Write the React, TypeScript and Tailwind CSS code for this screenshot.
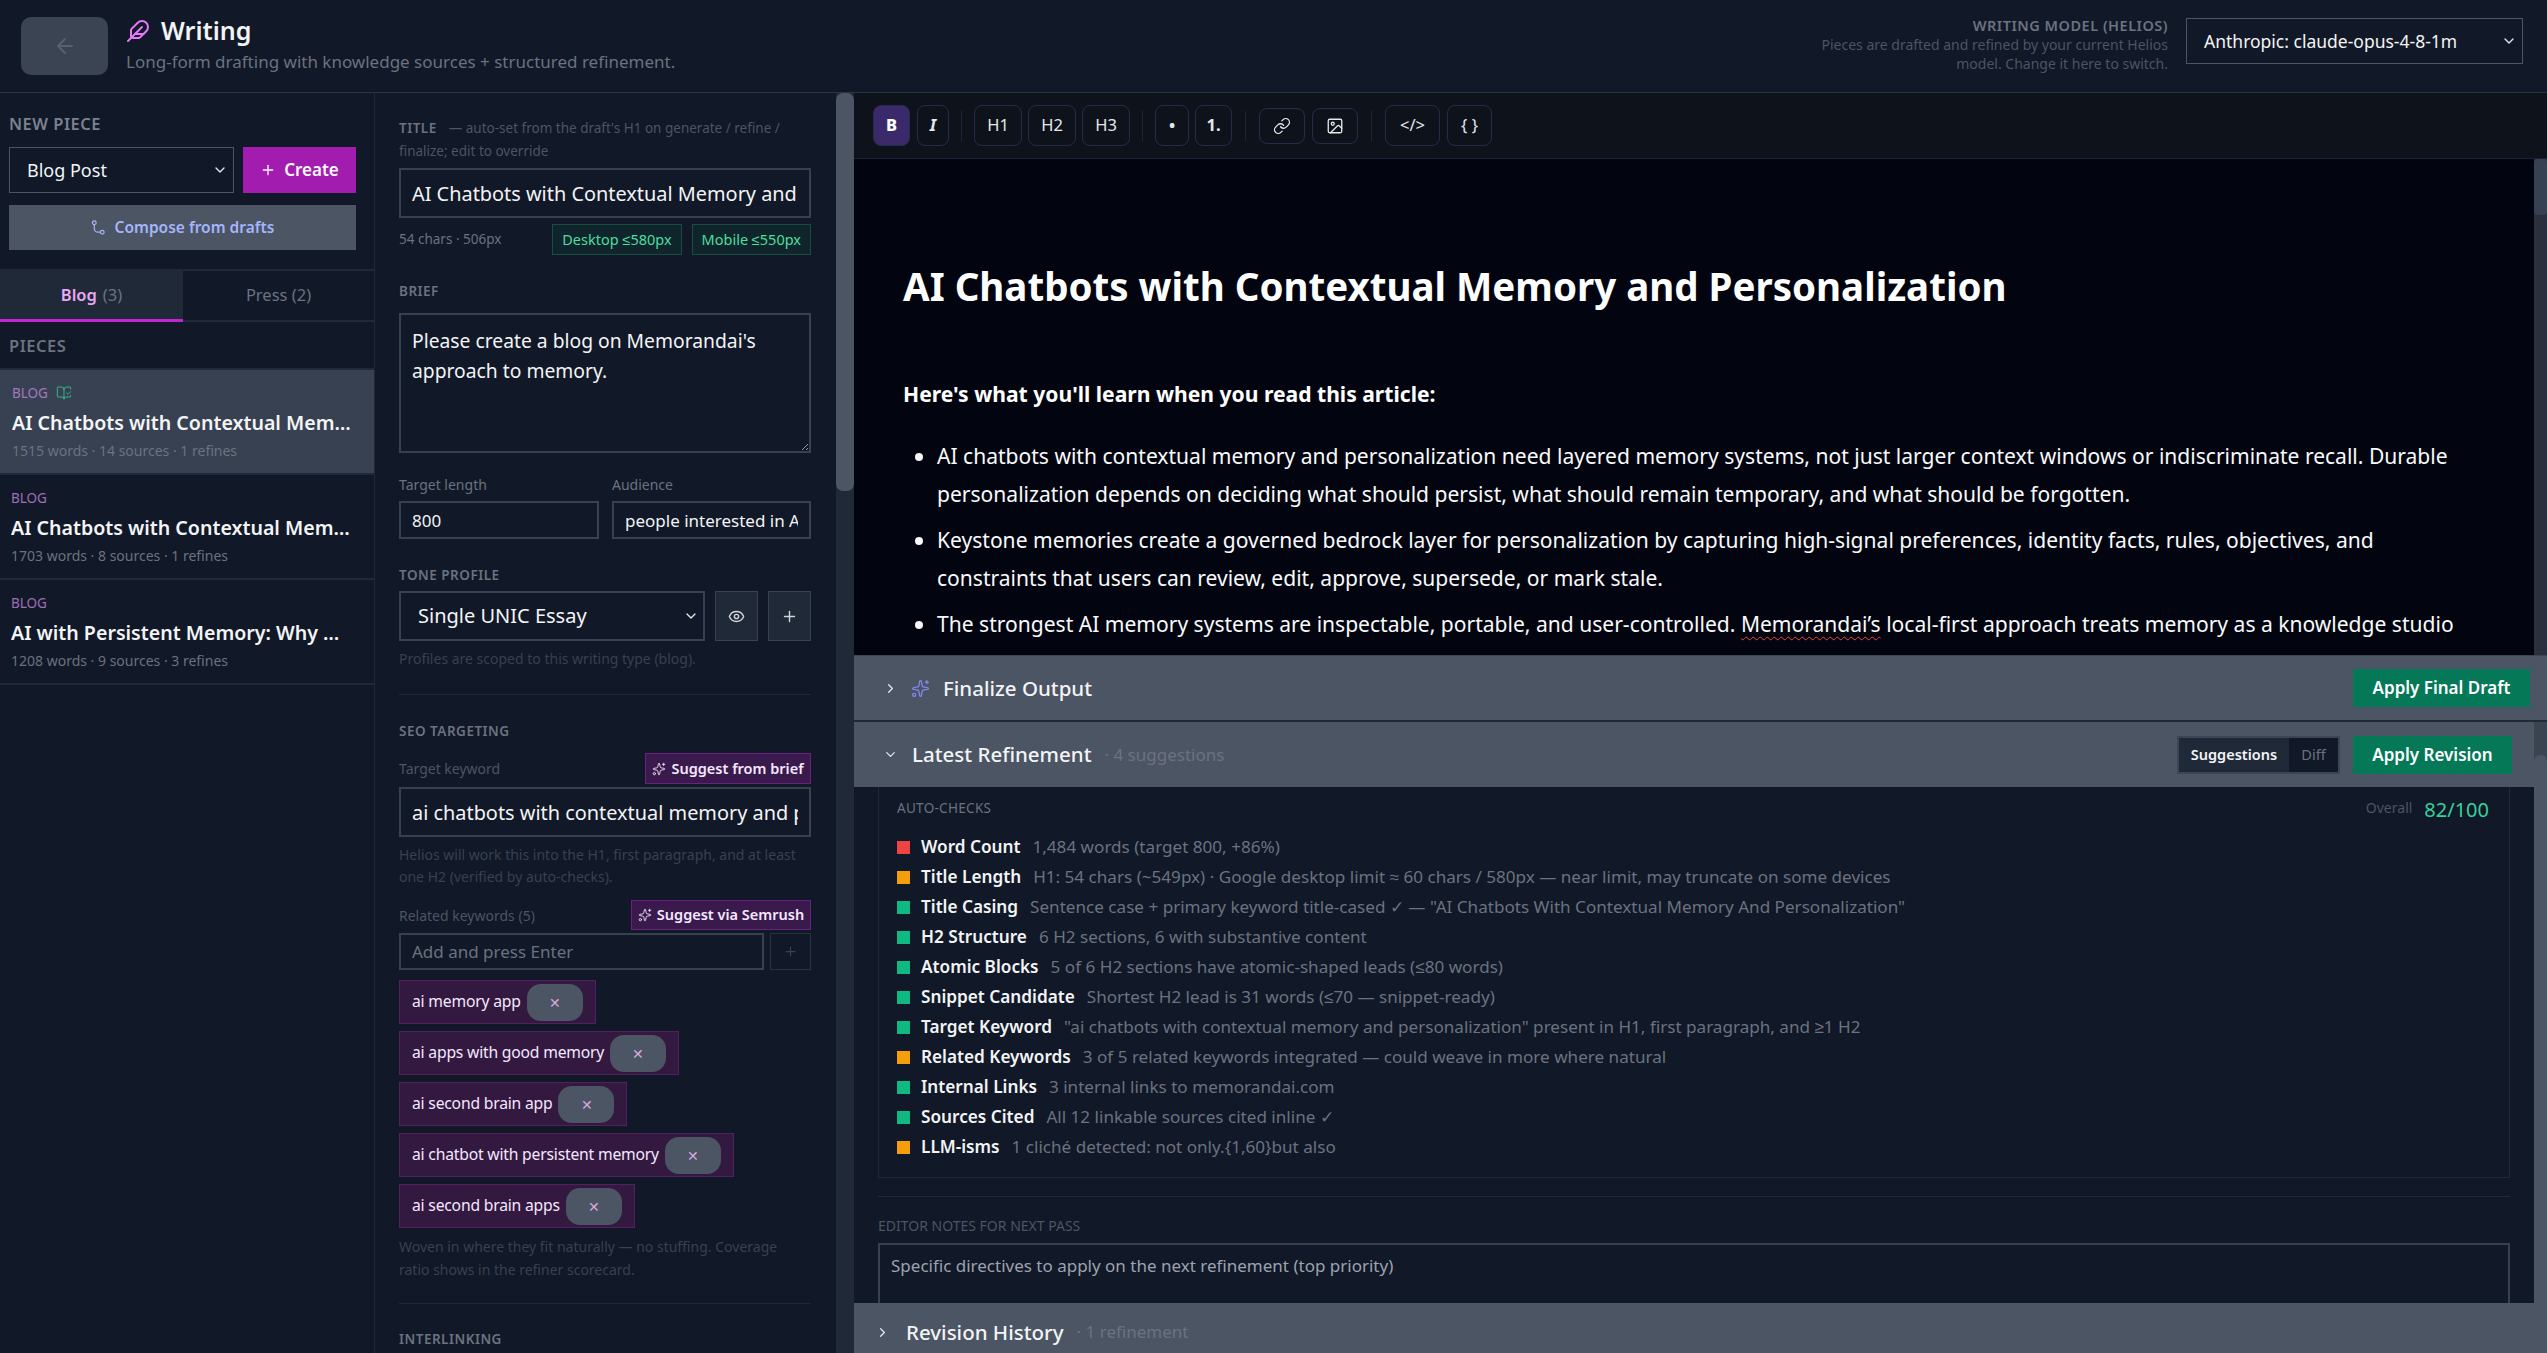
import React from "react";
import { ArrowLeft, BookOpenCheck, ChevronDown, ChevronRight, Eye, Feather, Image as ImageIcon, Link as LinkIcon, Plus, Sparkles } from "lucide-react";

const checks: [string, string, string][] = [
  ["bg-[#ef4444]", "Word Count", "1,484 words (target 800, +86%)"],
  ["bg-[#f59e0b]", "Title Length", "H1: 54 chars (~549px) · Google desktop limit ≈ 60 chars / 580px — near limit, may truncate on some devices"],
  ["bg-[#10b981]", "Title Casing", "Sentence case + primary keyword title-cased ✓ — \"AI Chatbots With Contextual Memory And Personalization\""],
  ["bg-[#10b981]", "H2 Structure", "6 H2 sections, 6 with substantive content"],
  ["bg-[#10b981]", "Atomic Blocks", "5 of 6 H2 sections have atomic-shaped leads (≤80 words)"],
  ["bg-[#10b981]", "Snippet Candidate", "Shortest H2 lead is 31 words (≤70 — snippet-ready)"],
  ["bg-[#10b981]", "Target Keyword", "\"ai chatbots with contextual memory and personalization\" present in H1, first paragraph, and ≥1 H2"],
  ["bg-[#f59e0b]", "Related Keywords", "3 of 5 related keywords integrated — could weave in more where natural"],
  ["bg-[#10b981]", "Internal Links", "3 internal links to memorandai.com"],
  ["bg-[#10b981]", "Sources Cited", "All 12 linkable sources cited inline ✓"],
  ["bg-[#f59e0b]", "LLM-isms", "1 cliché detected: not only.{1,60}but also"],
];

const Label = ({ children, className = "" }: { children: React.ReactNode; className?: string }) => (
  <div className={"h-5 leading-5 text-[13.5px] font-semibold tracking-[0.5px] text-[#6b7280] " + className}>{children}</div>
);

const inputCls = "w-full bg-[#111827] border-2 border-[#374151] text-[#f3f4f6] px-[11px] outline-none";

const Select = ({ value, className = "", selectClass = "" }: { value: string; className?: string; selectClass?: string }) => (
  <div className={"relative " + className}>
    <select className={"appearance-none w-full h-full bg-[#111827] text-[#f3f4f6] pl-[17px] outline-none " + selectClass}>
      <option>{value}</option>
    </select>
    <ChevronDown className="absolute right-[6px] top-1/2 -translate-y-1/2 w-[16px] h-[16px] text-[#e5e7eb] pointer-events-none" strokeWidth={2} />
  </div>
);

const Piece = ({ title, meta, active, icon }: { title: string; meta: string; active?: boolean; icon?: boolean }) => (
  <div className={"h-[105px] pr-[20px] pt-[12px] border-b-2 border-[#1f2937] " + (active ? "bg-[#374151] pl-[12px]" : "pl-[11px]")}>
    <div className="flex items-center gap-2 h-[22px] text-[13.5px] text-[#c084d8] opacity-80">
      BLOG
      {icon && <BookOpenCheck className="w-[16px] h-[16px] text-[#34d399]" strokeWidth={1.5} />}
    </div>
    <div className="mt-[4px] h-[30px] leading-[30px] text-[19.6px] font-semibold text-[#f3f4f6] truncate">{title}</div>
    <div className="mt-[2px] h-[22px] leading-[22px] text-[14px] text-[#6b7280]">{meta}</div>
  </div>
);

const Chip = ({ text }: { text: string }) => (
  <div className="self-start inline-flex items-center gap-[6px] h-[44px] pl-[12px] pr-[12px] bg-[#33183f] border border-[#51205f] text-[15.7px] text-[#f3e8ff] tracking-[-0.2px]">
    {text}
    <span className="flex items-center justify-center w-[56px] h-[37px] rounded-[14px] bg-[#4b5563] text-[#d8a8e0] text-[14px]">✕</span>
  </div>
);

const ToolBtn = ({ children, className = "" }: { children: React.ReactNode; className?: string }) => (
  <button className={"flex items-center justify-center h-[41px] rounded-[8px] border border-[#272b4a] text-[#e5e7eb] text-[16.5px] " + className}>{children}</button>
);
const Sep = () => <div className="w-px h-[30px] mx-[12px] bg-[#1f2433]" />;

export default function App() {
  return (
    <div className="h-[1353px] w-[2547px] overflow-hidden flex flex-col bg-[#111827] font-['Noto_Sans',sans-serif]">
      <header className="h-[93px] shrink-0 flex items-center border-b border-[#2a3442] bg-[#111827]">
        <button className="ml-[21px] w-[87px] h-[58px] rounded-[10px] bg-[#3a4452] flex items-center justify-center text-[#566070]">
          <ArrowLeft className="w-[24px] h-[24px]" strokeWidth={2} />
        </button>
        <div className="ml-[18px] -mt-[4px]">
          <div className="flex items-center h-[35px]">
            <Feather className="w-[24px] h-[24px] text-[#e879f9]" strokeWidth={2} />
            <span className="ml-[11px] text-[25px] font-semibold text-[#f3f4f6]">Writing</span>
          </div>
          <div className="text-[17px] leading-[27px] text-[#6b7280]">Long-form drafting with knowledge sources + structured refinement.</div>
        </div>
        <div className="ml-auto text-right mr-[18px] -mt-[4px]">
          <div className="text-[14.5px] leading-[20px] font-semibold tracking-[0.5px] text-[#6b7280]">WRITING MODEL (HELIOS)</div>
          <div className="text-[14px] leading-[19px] text-[#4b5563]">Pieces are drafted and refined by your current Helios<br />model. Change it here to switch.</div>
        </div>
        <Select value="Anthropic: claude-opus-4-8-1m" className="mr-[24px] w-[337px] h-[46px] mb-[10px]" selectClass="border border-[#4b5563] text-[17.5px]" />
      </header>

      <div className="flex-1 flex min-h-0">
        {/* Left rail */}
        <aside className="w-[375px] shrink-0 border-r border-[#1f2937] flex flex-col">
          <div className="px-[9px] pt-[21px] pb-[19px]">
            <Label className="!text-[16.5px] text-[#7a8290]">NEW PIECE</Label>
            <div className="mt-[13px] flex gap-[9px] h-[46px]">
              <Select value="Blog Post" className="w-[225px] h-full" selectClass="border border-[#4b5563] text-[18px]" />
              <button className="w-[113px] h-full bg-[#a21caf] text-[#f9f9f9] text-[17px] font-semibold flex items-center justify-center gap-[8px]">
                <Plus className="w-[16px] h-[16px]" />Create
              </button>
            </div>
            <button className="mt-[12px] w-[347px] h-[45px] bg-[#4b5563] text-[#a5b4fc] text-[15.5px] font-semibold flex items-center justify-center gap-[9px]">
              <svg viewBox="0 0 16 16" fill="none" stroke="currentColor" strokeWidth="1.3" strokeLinecap="round" className="w-[15px] h-[15px]">
                <circle cx="3.5" cy="3" r="2" />
                <path d="M3.5 5v4a4 4 0 0 0 4 4h2" />
                <circle cx="12" cy="13" r="2" />
              </svg>
              Compose from drafts
            </button>
          </div>
          <div className="h-[53px] flex border-y-2 border-[#1f2937] text-[16.5px]">
            <div className="w-[183px] bg-[#1f2937] border-b-[3px] border-[#c026d3] -mb-[2px] flex items-center justify-center gap-[6px] text-[#e9a8f5] font-semibold">
              Blog <span className="font-normal text-[#6b7280]">(3)</span>
            </div>
            <div className="flex-1 flex items-center justify-center text-[#6b7280]">Press (2)</div>
          </div>
          <div className="h-[47px] flex items-center px-[9px]">
            <Label className="!text-[16.5px]">PIECES</Label>
          </div>
          <div className="border-t-2 border-[#1f2937] -mt-[1px]">
            <Piece active icon title="AI Chatbots with Contextual Memory and Personalization" meta="1515 words · 14 sources · 1 refines" />
            <Piece title="AI Chatbots with Contextual Memory and Personalization" meta="1703 words · 8 sources · 1 refines" />
            <Piece title="AI with Persistent Memory: Why Most Assistants Forget" meta="1208 words · 9 sources · 3 refines" />
          </div>
        </aside>

        {/* Middle form */}
        <section className="w-[461px] shrink-0 pl-[24px] pr-[25px] pt-[24px] overflow-hidden">
          <div className="text-[13.5px] leading-[23px] text-[#4b5563]">
            <span className="font-semibold tracking-[0.5px] text-[#6b7280] mr-[12px]">TITLE</span>— auto-set from the draft's H1 on generate / refine / finalize; edit to override
          </div>
          <input defaultValue="AI Chatbots with Contextual Memory and Personalization" className={inputCls + " mt-[5px] h-[50px] text-[19.9px]"} />
          <div className="mt-[6px] h-[31px] flex items-center text-[13.5px] text-[#6b7280]">
            <span>54 chars · 506px</span>
            <span className="ml-auto h-full px-[9px] flex items-center bg-[#10252b] border border-[#164e43] text-[#4ade9f] text-[14.5px]">Desktop ≤580px</span>
            <span className="ml-[10px] h-full px-[9px] flex items-center bg-[#10252b] border border-[#164e43] text-[#4ade9f] text-[14.5px]">Mobile ≤550px</span>
          </div>
          <Label className="mt-[26px]">BRIEF</Label>
          <textarea defaultValue={"Please create a blog on Memorandai's approach to memory."} className={inputCls + " block mt-[12px] h-[140px] py-[11px] leading-[30px] text-[19.3px]"} />
          <div className="mt-[22px] grid grid-cols-[200px_199px] gap-x-[13px]">
            <div className="text-[14px] leading-5 text-[#6b7280]">Target length</div>
            <div className="text-[14px] leading-5 text-[#6b7280]">Audience</div>
            <input defaultValue="800" className={inputCls + " mt-[6px] h-[38px] text-[17px]"} />
            <input defaultValue="people interested in AI memory" className={inputCls + " mt-[6px] h-[38px] text-[17px]"} />
          </div>
          <Label className="mt-[26px]">TONE PROFILE</Label>
          <div className="mt-[6px] flex h-[50px] gap-[10px]">
            <Select value="Single UNIC Essay" className="w-[306px] h-full" selectClass="border-2 border-[#374151] text-[20px]" />
            <button className="w-[43px] h-full bg-[#1f2937] border border-[#374151] flex items-center justify-center text-[#d1d5db]"><Eye className="w-[17px] h-[17px]" /></button>
            <button className="w-[43px] h-full bg-[#1f2937] border border-[#374151] flex items-center justify-center text-[#d1d5db]"><Plus className="w-[17px] h-[17px]" /></button>
          </div>
          <div className="mt-[8px] text-[14px] leading-5 text-[#374151]">Profiles are scoped to this writing type (blog).</div>
          <div className="mt-[25px] h-px bg-[#1f2937]" />
          <Label className="mt-[26px]">SEO TARGETING</Label>
          <div className="mt-[12px] h-[31px] flex items-center justify-between">
            <span className="text-[14px] text-[#4b5563]">Target keyword</span>
            <button className="h-full w-[166px] bg-[#3a1a4d] border border-[#6b217f] text-[#f5e8ff] text-[14.5px] font-semibold flex items-center justify-center gap-[5px]"><Sparkles className="w-[14px] h-[14px]" strokeWidth={1.5} />Suggest from brief</button>
          </div>
          <input defaultValue="ai chatbots with contextual memory and personalization" className={inputCls + " mt-[3px] h-[50px] text-[19.9px]"} />
          <div className="mt-[7px] text-[14px] leading-[22px] text-[#374151]">Helios will work this into the H1, first paragraph, and at least one H2 (verified by auto-checks).</div>
          <div className="mt-[12px] h-[30px] flex items-center justify-between">
            <span className="text-[14px] text-[#4b5563]">Related keywords (5)</span>
            <button className="h-full w-[180px] bg-[#3a1a4d] border border-[#6b217f] text-[#f5e8ff] text-[14.5px] font-semibold flex items-center justify-center gap-[5px]"><Sparkles className="w-[14px] h-[14px]" strokeWidth={1.5} />Suggest via Semrush</button>
          </div>
          <div className="mt-[3px] h-[37px] flex gap-[6px]">
            <input placeholder="Add and press Enter" className="flex-1 min-w-0 h-full bg-[#111827] border-2 border-[#374151] text-[17px] px-[11px] outline-none placeholder:text-[#6b7280]" />
            <button className="w-[41px] h-full border border-[#293241] flex items-center justify-center text-[#374151]"><Plus className="w-[15px] h-[15px]" /></button>
          </div>
          <div className="mt-[10px] flex flex-col gap-[7px]">
            <Chip text="ai memory app" />
            <Chip text="ai apps with good memory" />
            <Chip text="ai second brain app" />
            <Chip text="ai chatbot with persistent memory" />
            <Chip text="ai second brain apps" />
          </div>
          <div className="mt-[7px] text-[14px] leading-[23px] text-[#374151]">Woven in where they fit naturally — no stuffing. Coverage ratio shows in the refiner scorecard.</div>
          <div className="mt-[22px] h-px bg-[#1f2937]" />
          <Label className="mt-[25px]">INTERLINKING</Label>
        </section>

        {/* Form scrollbar */}
        <div className="w-[18px] shrink-0 bg-[#1f2937]">
          <div className="h-[398px] rounded-[7px] bg-[#4b5563]" />
        </div>

        {/* Editor column */}
        <main className="flex-1 min-w-0 flex flex-col">
          <div className="h-[66px] shrink-0 flex items-center pl-[19px] pr-[18px] bg-[#0e131b] border-b border-[#1e2138]">
            <ToolBtn className="w-[37px] bg-[#3b2a6b] text-white font-extrabold">B</ToolBtn>
            <ToolBtn className="w-[32px] ml-[7px] italic font-bold">I</ToolBtn>
            <Sep />
            <ToolBtn className="w-[48px]">H1</ToolBtn>
            <ToolBtn className="w-[48px] ml-[6px]">H2</ToolBtn>
            <ToolBtn className="w-[48px] ml-[6px]">H3</ToolBtn>
            <Sep />
            <ToolBtn className="w-[34px] font-bold">•</ToolBtn>
            <ToolBtn className="w-[37px] ml-[6px] font-bold">1.</ToolBtn>
            <div className="w-px h-[30px] mx-[13px] bg-[#1f2433]" />
            <ToolBtn className="w-[46px] !h-[36px]"><LinkIcon className="w-[18px] h-[18px]" strokeWidth={1.75} /></ToolBtn>
            <ToolBtn className="w-[46px] !h-[36px] ml-[7px]"><ImageIcon className="w-[18px] h-[18px]" strokeWidth={1.75} /></ToolBtn>
            <div className="w-px h-[30px] mx-[13px] bg-[#1f2433]" />
            <ToolBtn className="w-[55px]">&lt;/&gt;</ToolBtn>
            <ToolBtn className="w-[45px] ml-[7px]">{"{ }"}</ToolBtn>
          </div>

          <div className="h-[496px] shrink-0 flex bg-[#020510] overflow-hidden">
            <article className="flex-1 min-w-0 pl-[49px] pr-[58px] pt-[99px] text-[#f9fafb]">
              <h1 className="text-[38.5px] leading-[56px] font-bold text-white">AI Chatbots with Contextual Memory and Personalization</h1>
              <p className="mt-[61px] text-[21.1px] leading-[37px] font-bold text-white">Here's what you'll learn when you read this article:</p>
              <ul className="mt-[25px] pl-[34px] list-disc text-[21.05px] leading-[37.5px]">
                <li>AI chatbots with contextual memory and personalization need layered memory systems, not just larger context windows or indiscriminate recall. Durable personalization depends on deciding what should persist, what should remain temporary, and what should be forgotten.</li>
                <li className="mt-[9px]">Keystone memories create a governed bedrock layer for personalization by capturing high-signal preferences, identity facts, rules, objectives, and constraints that users can review, edit, approve, supersede, or mark stale.</li>
                <li className="mt-[9px]">The strongest AI memory systems are inspectable, portable, and user-controlled. <span className="underline decoration-wavy decoration-[#ef4444] decoration-1 underline-offset-4">Memorandai’s</span> local-first approach treats memory as a knowledge studio</li>
              </ul>
            </article>
            <div className="w-[13px] shrink-0 bg-[#2a303e]">
              <div className="h-[56px] rounded-[4px] bg-[#374151]" />
            </div>
          </div>

          <div className="h-[65px] shrink-0 flex items-center pl-[29px] pr-[17px] bg-[#4b5563] border-t border-[#3b4553]">
            <ChevronRight className="w-[15px] h-[15px] text-[#e5e7eb]" />
            <Sparkles className="ml-[13px] w-[19px] h-[19px] text-[#818cf8]" strokeWidth={1.5} />
            <span className="ml-[13px] text-[20.5px] font-medium text-[#f3f4f6]">Finalize Output</span>
            <button className="ml-auto w-[177px] h-[38px] bg-[#047857] text-white text-[17px] font-semibold">Apply Final Draft</button>
          </div>
          <div className="h-[2px] shrink-0 bg-[#1f2937]" />

          <div className="flex-1 min-h-0 flex">
            <div className="flex-1 min-w-0 flex flex-col">
              <div className="h-[65px] shrink-0 flex items-center pl-[29px] pr-[22px] bg-[#4b5563]">
                <ChevronDown className="w-[15px] h-[15px] text-[#e5e7eb]" />
                <span className="ml-[14px] text-[20.5px] font-medium text-[#f3f4f6]">Latest Refinement</span>
                <span className="ml-[13px] text-[17px] text-[#6b7280]">· 4 suggestions</span>
                <div className="ml-auto h-[38px] flex border-2 border-[#3b4553] bg-[#111827]">
                  <span className="w-[110px] flex items-center justify-center bg-[#1f2937] text-[#f3f4f6] text-[14.5px] font-semibold">Suggestions</span>
                  <span className="w-[49px] flex items-center justify-center text-[#6b7280] text-[14.5px]">Diff</span>
                </div>
                <button className="ml-[13px] w-[159px] h-[38px] bg-[#047857] text-white text-[17px] font-semibold">Apply Revision</button>
              </div>

              <div className="h-[517px] shrink-0 px-[24px] bg-[#111827] overflow-hidden">
                <div className="h-[391px] border-x border-b border-[#1f2937] px-[18px]">
                  <div className="h-[45px] flex">
                    <span className="mt-[11px] text-[13.5px] leading-5 tracking-[0.3px] text-[#6b7280]">AUTO-CHECKS</span>
                    <span className="ml-auto mt-[11px] text-[14px] leading-5 text-[#4b5563]">Overall</span>
                    <span className="ml-[12px] mr-[2px] mt-[11px] text-[20px] leading-6 text-[#34d399]">82/100</span>
                  </div>
                  {checks.map(([c, l, d]) => (
                    <div key={l} className="h-[30px] flex items-center">
                      <span className={"w-[13px] h-[13px] shrink-0 " + c} />
                      <span className="ml-[11px] font-semibold text-[#f3f4f6] text-[17.2px]">{l}</span>
                      <span className="ml-[12px] text-[#6b7280] text-[17.1px]">{d}</span>
                    </div>
                  ))}
                </div>
                <div className="mt-[18px] h-px bg-[#1f2937]" />
                <div className="mt-[19px] text-[14px] leading-5 text-[#4b5563]">EDITOR NOTES FOR NEXT PASS</div>
                <textarea placeholder="Specific directives to apply on the next refinement (top priority)" className="block mt-[7px] w-full h-[80px] bg-[#111827] border-2 border-[#374151] text-[17px] px-[11px] py-[9px] leading-6 outline-none placeholder:text-[#9ca3af]" />
              </div>
            </div>
            <div className="w-[13px] shrink-0 flex flex-col bg-[#3a4350]">
              <div className="mt-[33px] flex-1 rounded-t-[6px] bg-[#4b5563]" />
            </div>
          </div>

          <div className="h-[50px] shrink-0 flex items-center pl-[21px] pt-[8px] bg-[#4b5563] -mt-[50px] relative">
            <ChevronRight className="w-[15px] h-[15px] text-[#e5e7eb]" />
            <span className="ml-[16px] text-[20.5px] font-medium text-[#f3f4f6]">Revision History</span>
            <span className="ml-[13px] text-[17px] text-[#6b7280]">· 1 refinement</span>
          </div>
        </main>
      </div>
    </div>
  );
}
